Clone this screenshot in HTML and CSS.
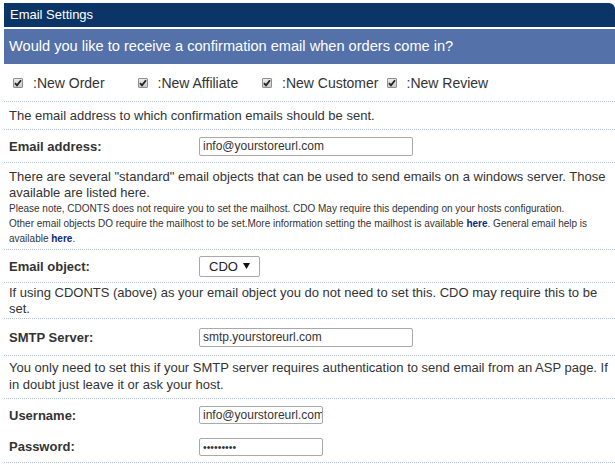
FILE: index.html
```html
<!DOCTYPE html>
<html>
<head>
<meta charset="utf-8">
<link rel="stylesheet" href="styles.css">
</head>
<body>
<div class="panel">
  <div class="title">Email Settings</div>
  <div class="question">Would you like to receive a confirmation email when orders come in?</div>
  <div class="row checks">
    <label class="chk"><span class="box"><svg width="8" height="8" viewBox="0 0 8 8"><path d="M1 4.2 L3 6.4 L7 1.2" fill="none" stroke="#222" stroke-width="1.8"/></svg></span>:New Order</label>
    <label class="chk"><span class="box"><svg width="8" height="8" viewBox="0 0 8 8"><path d="M1 4.2 L3 6.4 L7 1.2" fill="none" stroke="#222" stroke-width="1.8"/></svg></span>:New Affiliate</label>
    <label class="chk"><span class="box"><svg width="8" height="8" viewBox="0 0 8 8"><path d="M1 4.2 L3 6.4 L7 1.2" fill="none" stroke="#222" stroke-width="1.8"/></svg></span>:New Customer</label>
    <label class="chk"><span class="box"><svg width="8" height="8" viewBox="0 0 8 8"><path d="M1 4.2 L3 6.4 L7 1.2" fill="none" stroke="#222" stroke-width="1.8"/></svg></span>:New Review</label>
  </div>
  <div class="row text first">The email address to which confirmation emails should be sent.</div>
  <div class="row field">
    <span class="lbl">Email address:</span>
    <span class="input wide">info@yourstoreurl.com</span>
  </div>
  <div class="row text para">
    <p>There are several "standard" email objects that can be used to send emails on a windows server. Those available are listed here.</p>
    <p class="small">Please note, CDONTS does not require you to set the mailhost. CDO May require this depending on your hosts configuration.<br>Other email objects DO require the mailhost to be set.More information setting the mailhost is available <a href="#">here</a>. General email help is available <a href="#">here</a>.</p>
  </div>
  <div class="row field">
    <span class="lbl">Email object:</span>
    <span class="select">CDO<svg width="7" height="6" viewBox="0 0 7 6"><path d="M0 0 H7 L3.5 6 Z" fill="#111"/></svg></span>
  </div>
  <div class="row text tight">If using CDONTS (above) as your email object you do not need to set this. CDO may require this to be set.</div>
  <div class="row field tall">
    <span class="lbl">SMTP Server:</span>
    <span class="input wide">smtp.yourstoreurl.com</span>
  </div>
  <div class="row text loose">You only need to set this if your SMTP server requires authentication to send email from an ASP page. If in doubt just leave it or ask your host.</div>
  <div class="row field noline">
    <span class="lbl">Username:</span>
    <span class="input narrow">info@yourstoreurl.com</span>
  </div>
  <div class="row field short">
    <span class="lbl">Password:</span>
    <span class="input narrow pw">•••••••••</span>
  </div>
</div>
</body>
</html>
```
FILE: styles.css
```css
html, body {
  margin: 0;
  padding: 0;
  background: #fff;
}
body {
  font-family: "Liberation Sans", Arial, sans-serif;
  color: #333;
  overflow: hidden;
}
.panel {
  margin: 3px 0 0 4px;
  width: 611px;
}
.title {
  background: #0c3567;
  color: #fff;
  font-size: 13px;
  height: 24px;
  line-height: 24px;
  padding-left: 6px;
  border-top-right-radius: 6px;
}
.question {
  margin-top: 2px;
  background: #5571aa;
  color: #fff;
  font-size: 14.6px;
  height: 35px;
  line-height: 35px;
  padding-left: 5px;
}
.row {
  border-bottom: 1px dotted #b8c6dc;
  padding-left: 5px;
  font-size: 13px;
}
.row.noline {
  border-bottom: none;
}
.checks {
  display: flex;
  align-items: center;
  height: 37px;
  padding-left: 9px;
  font-size: 14px;
}
.chk {
  display: flex;
  align-items: center;
  width: 124.5px;
  flex: none;
}
.box {
  box-sizing: border-box;
  width: 10px;
  height: 10px;
  border: 1px solid #8f8f8f;
  background: linear-gradient(#ececec, #c9c9c9);
  display: inline-flex;
  align-items: center;
  justify-content: center;
  margin-right: 10px;
  border-radius: 1px;
}
.text {
  padding-top: 6px;
  padding-bottom: 5px;
  line-height: 16px;
}
.text.first {
  padding-top: 6px;
  padding-bottom: 5px;
}
.text.tight {
  padding-top: 2px;
  padding-bottom: 1px;
  line-height: 16px;
}
.text.loose {
  padding-top: 3px;
  padding-bottom: 5px;
  line-height: 17px;
}
.para {
  padding-top: 6px;
  padding-bottom: 3px;
}
.para p {
  margin: 0;
}
.para .small {
  font-size: 10px;
  line-height: 15px;
}
a {
  color: #0c2a7a;
  font-weight: bold;
  text-decoration: none;
}
.field {
  display: flex;
  align-items: center;
  height: 32px;
}
.field.tall {
  height: 36px;
}
.field.short {
  height: 31px;
}
.lbl {
  width: 190px;
  flex: none;
  font-weight: bold;
  font-size: 13px;
}
.input {
  box-sizing: border-box;
  height: 19px;
  border: 1px solid #a9a9a9;
  border-radius: 2px;
  font-size: 12px;
  line-height: 17px;
  padding-left: 3px;
  color: #333;
  overflow: hidden;
  white-space: nowrap;
}
.wide { width: 214px; }
.narrow { width: 124px; height: 18px; line-height: 16px; }
.pw { font-size: 10.5px; }
.select {
  box-sizing: border-box;
  width: 61px;
  height: 21px;
  border: 1px solid #a9a9a9;
  border-radius: 2px;
  font-size: 13px;
  display: flex;
  align-items: center;
  justify-content: space-between;
  padding: 0 9px 0 9px;
  color: #222;
}
```
